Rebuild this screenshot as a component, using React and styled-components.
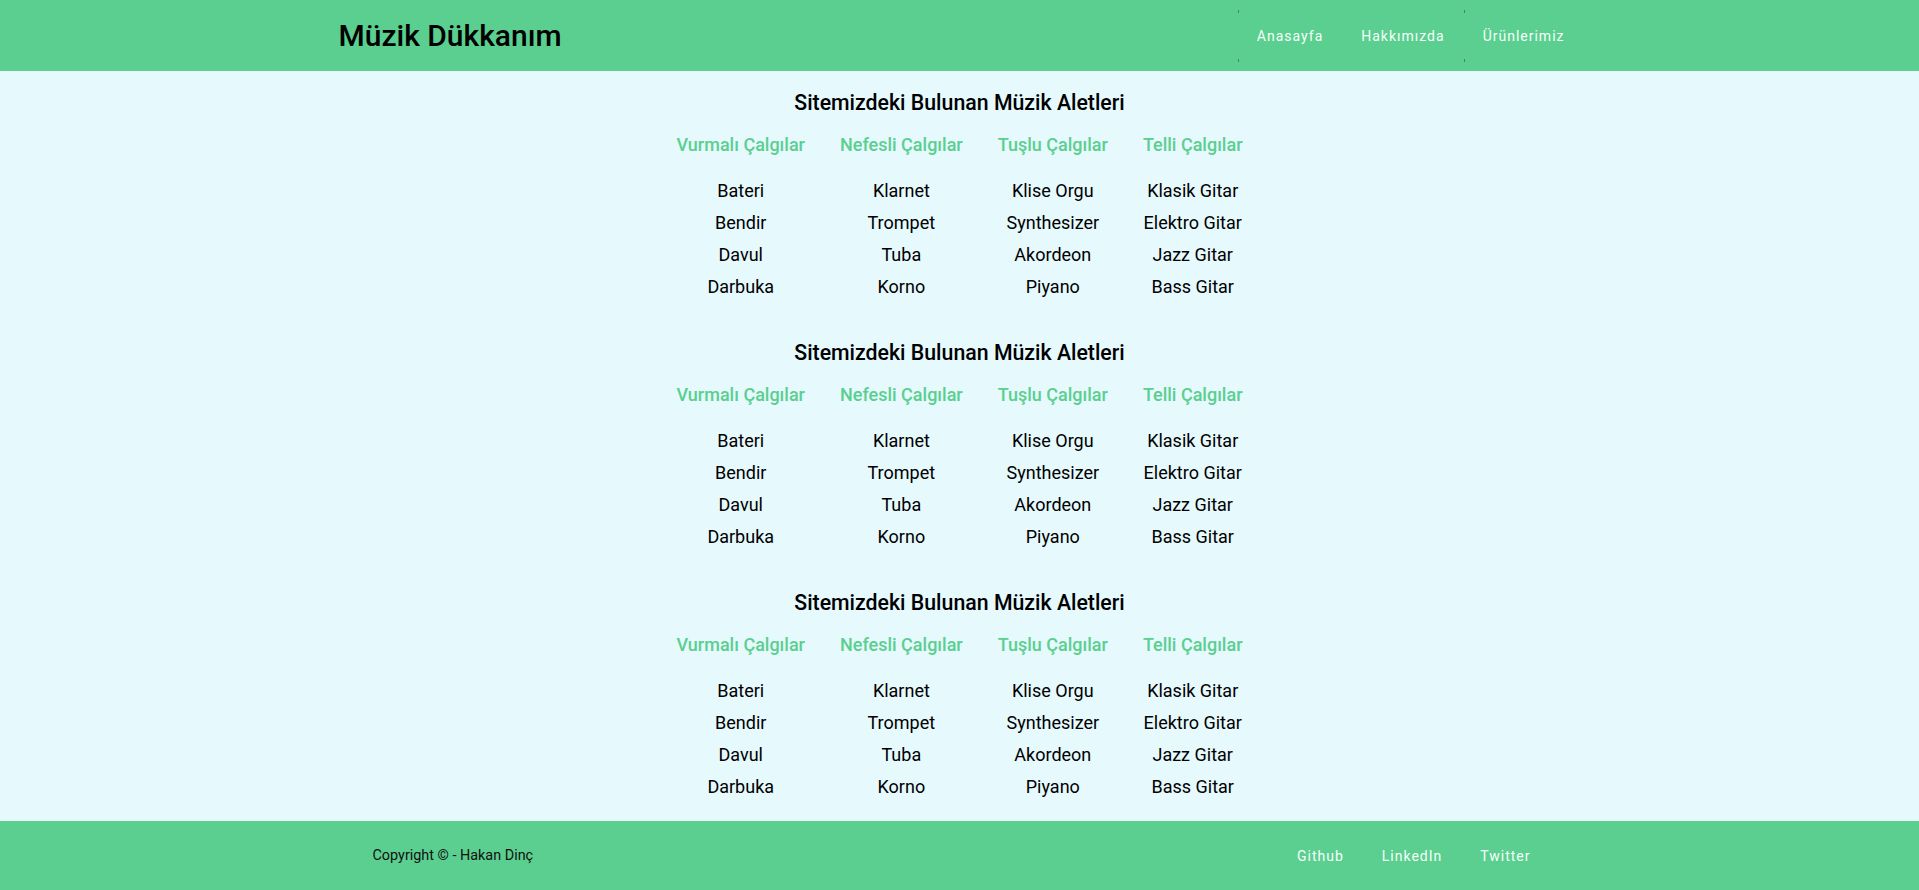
import styled, { createGlobalStyle } from 'styled-components';

const GREEN = '#5acf8f';

const GlobalStyle = createGlobalStyle`
  * {
    box-sizing: border-box;
  }

  body {
    margin: 0;
    background: #e6f9fd;
    font-family: Roboto, 'Noto Sans', 'Liberation Sans', sans-serif;
    color: #000;
  }

  a {
    text-decoration: none;
    color: inherit;
  }
`;

const Page = styled.div`
  min-height: 100vh;
  display: flex;
  flex-direction: column;
`;

const Header = styled.header`
  background: ${GREEN};
  height: 71px;
`;

const HeaderInner = styled.div`
  max-width: 1280px;
  height: 100%;
  margin: 0 auto;
  padding: 0 16px 0 19px;
  display: flex;
  align-items: center;
  justify-content: space-between;
`;

const Logo = styled.a`
  font-size: 30px;
  font-weight: 500;
  color: #000;
  line-height: 1;
`;

const Nav = styled.nav`
  display: flex;
  align-items: center;
  height: 52px;
`;

const NavLink = styled.a`
  position: relative;
  height: 100%;
  display: flex;
  align-items: center;
  padding: 0 19px;
  font-size: 14px;
  letter-spacing: 1px;
  color: #f6fffa;

  &::before,
  &::after {
    content: '';
    display: ${props => (props.$tick ? 'block' : 'none')};
    position: absolute;
    left: 0;
    width: 1px;
    height: 3px;
    background: rgba(20, 90, 50, 0.55);
  }

  &::before {
    top: 0;
  }

  &::after {
    bottom: 0;
  }
`;

const Main = styled.main`
  flex: 1;
`;

const Section = styled.section`
  padding: 18px 0 18px;
  display: flex;
  flex-direction: column;
  align-items: center;
`;

const Title = styled.h2`
  margin: 0;
  font-size: 21.3px;
  font-weight: 500;
  line-height: 27px;
`;

const Columns = styled.div`
  display: flex;
  justify-content: center;
  margin-top: 17px;
`;

const Column = styled.div`
  display: flex;
  flex-direction: column;
  align-items: center;
  padding: 0 17.5px;
`;

const ColumnTitle = styled.h3`
  margin: 0 0 18px;
  font-size: 18px;
  font-weight: 500;
  line-height: 24px;
  color: ${GREEN};
  white-space: nowrap;
`;

const Item = styled.span`
  font-size: 18px;
  line-height: 32px;
  white-space: nowrap;
`;

const Footer = styled.footer`
  background: ${GREEN};
  height: 69px;
`;

const FooterInner = styled.div`
  max-width: 1212px;
  height: 100%;
  margin: 0 auto;
  padding: 0 16px 0 19px;
  display: flex;
  align-items: center;
  justify-content: space-between;
`;

const Copyright = styled.p`
  margin: 0;
  font-size: 14.4px;
  color: #111;
`;

const FooterLinks = styled.div`
  display: flex;
`;

const FooterLink = styled.a`
  padding: 0 19px;
  font-size: 14px;
  letter-spacing: 1px;
  color: #f6fffa;
`;

const categories = [
  { title: 'Vurmalı Çalgılar', items: ['Bateri', 'Bendir', 'Davul', 'Darbuka'] },
  { title: 'Nefesli Çalgılar', items: ['Klarnet', 'Trompet', 'Tuba', 'Korno'] },
  { title: 'Tuşlu Çalgılar', items: ['Klise Orgu', 'Synthesizer', 'Akordeon', 'Piyano'] },
  { title: 'Telli Çalgılar', items: ['Klasik Gitar', 'Elektro Gitar', 'Jazz Gitar', 'Bass Gitar'] },
];

const Instruments = () => (
  <Section>
    <Title>Sitemizdeki Bulunan Müzik Aletleri</Title>
    <Columns>
      {categories.map(cat => (
        <Column key={cat.title}>
          <ColumnTitle>{cat.title}</ColumnTitle>
          {cat.items.map(item => (
            <Item key={item}>{item}</Item>
          ))}
        </Column>
      ))}
    </Columns>
  </Section>
);

const App = () => {
  return (
    <Page>
      <GlobalStyle />
      <Header>
        <HeaderInner>
          <Logo href="#">Müzik Dükkanım</Logo>
          <Nav>
            <NavLink href="#" $tick>Anasayfa</NavLink>
            <NavLink href="#">Hakkımızda</NavLink>
            <NavLink href="#" $tick>Ürünlerimiz</NavLink>
          </Nav>
        </HeaderInner>
      </Header>
      <Main>
        <Instruments />
        <Instruments />
        <Instruments />
      </Main>
      <Footer>
        <FooterInner>
          <Copyright>Copyright © - Hakan Dinç</Copyright>
          <FooterLinks>
            <FooterLink href="#">Github</FooterLink>
            <FooterLink href="#">LinkedIn</FooterLink>
            <FooterLink href="#">Twitter</FooterLink>
          </FooterLinks>
        </FooterInner>
      </Footer>
    </Page>
  );
};

export default App;
